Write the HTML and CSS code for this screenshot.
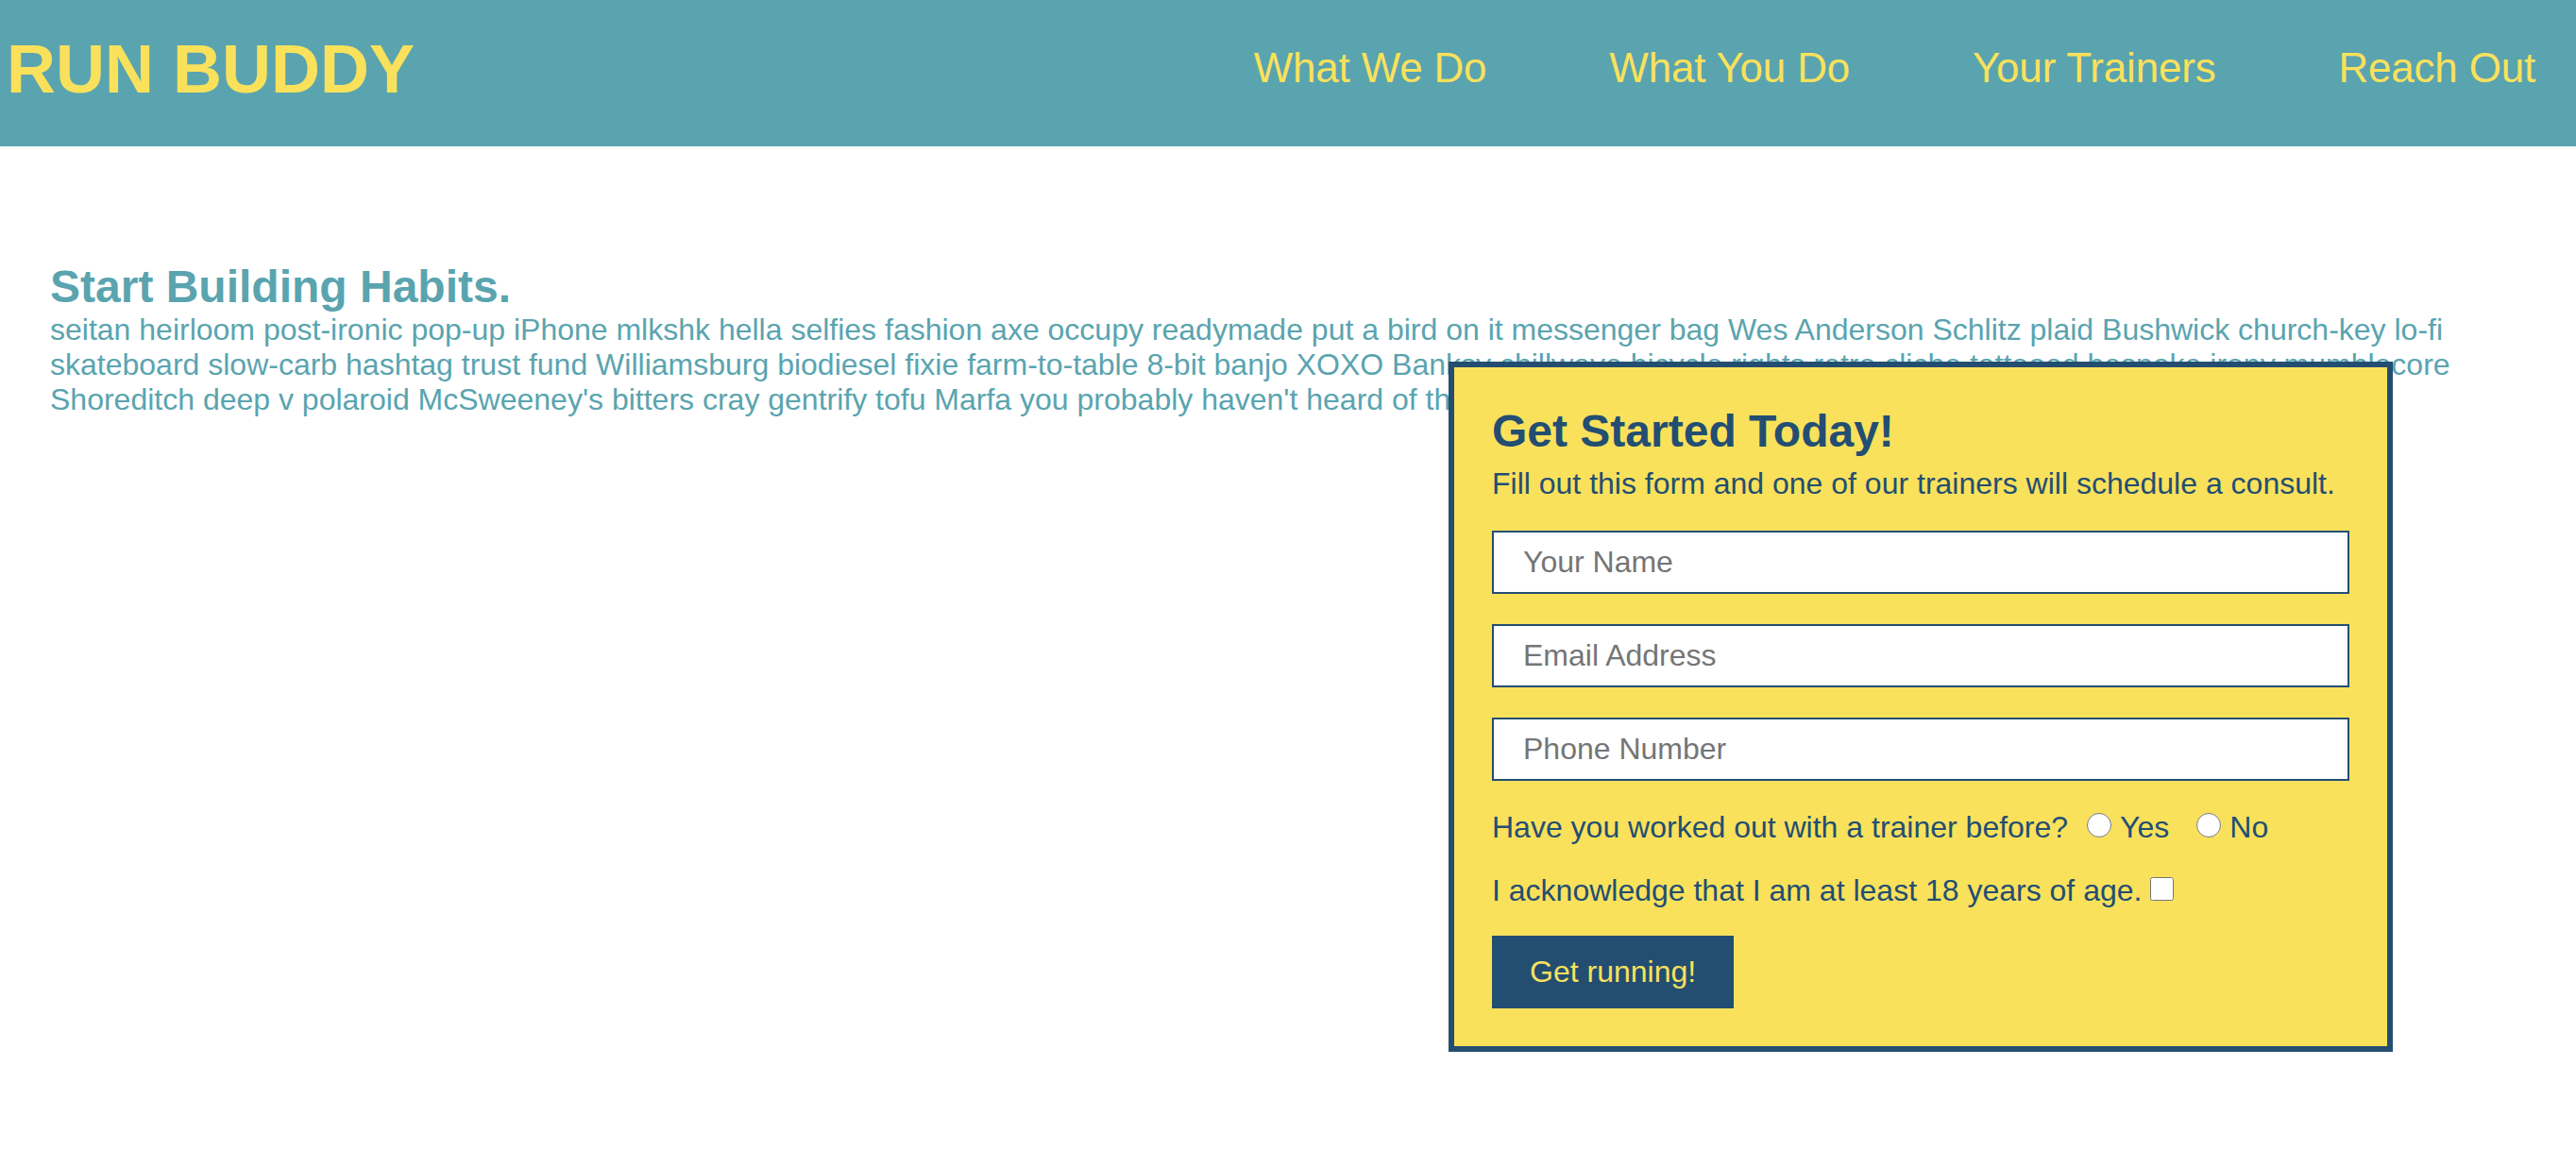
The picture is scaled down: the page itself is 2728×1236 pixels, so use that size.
FILE: index.html
```html
<!DOCTYPE html>
<html lang="en">
<head>
<meta charset="utf-8">
<title>Run Buddy</title>
<link rel="stylesheet" href="styles.css">
</head>
<body>
<header class="site-header">
  <h1 class="logo">RUN BUDDY</h1>
  <nav class="main-nav">
    <ul class="nav-list">
      <li><a class="nav-link" href="#what-we-do">What We Do</a></li>
      <li><a class="nav-link" href="#what-you-do">What You Do</a></li>
      <li><a class="nav-link" href="#your-trainers">Your Trainers</a></li>
      <li><a class="nav-link" href="#reach-out">Reach Out</a></li>
    </ul>
  </nav>
</header>
<main class="page">
  <section class="intro">
    <h2 class="intro-title">Start Building Habits.</h2>
    <p class="intro-text">seitan heirloom post-ironic pop-up iPhone mlkshk hella selfies fashion axe occupy readymade put a bird on it messenger bag Wes Anderson Schlitz plaid Bushwick church-key lo-fi skateboard slow-carb hashtag trust fund Williamsburg biodiesel fixie farm-to-table 8-bit banjo XOXO Banksy chillwave bicycle rights retro cliche tattooed bespoke irony mumblecore Shoreditch deep v polaroid McSweeney's bitters cray gentrify tofu Marfa you probably haven't heard of them.</p>
  </section>
  <form class="signup">
    <h2 class="signup-title">Get Started Today!</h2>
    <p class="signup-lead">Fill out this form and one of our trainers will schedule a consult.</p>
    <input class="field" type="text" placeholder="Your Name">
    <input class="field" type="email" placeholder="Email Address">
    <input class="field field-last" type="tel" placeholder="Phone Number">
    <p class="question">Have you worked out with a trainer before?<input class="radio radio-first" type="radio" name="trainer" id="yes"><label for="yes">Yes</label><input class="radio radio-second" type="radio" name="trainer" id="no"><label for="no">No</label></p>
    <p class="question">I acknowledge that I am at least 18 years of age.<input class="check" type="checkbox"></p>
    <button class="submit" type="button">Get running!</button>
  </form>
</main>
</body>
</html>
```

FILE: styles.css
```css
html, body {
  margin: 0;
  padding: 0;
  background: #ffffff;
  font-family: "Liberation Sans", Arial, Helvetica, sans-serif;
}

.site-header {
  box-sizing: border-box;
  height: 155px;
  background: #5aa4af;
  display: flex;
  justify-content: space-between;
  align-items: flex-start;
  padding: 0 43px 0 7px;
}

.logo {
  margin: 32px 0 0;
  font-size: 72px;
  line-height: 82px;
  font-weight: bold;
  color: #f9e15c;
}

.nav-list {
  display: flex;
  gap: 130px;
  list-style: none;
  margin: 46px 0 0;
  padding: 0;
}

.nav-link {
  display: block;
  font-size: 44px;
  line-height: 51px;
  letter-spacing: -0.2px;
  color: #f9e15c;
  text-decoration: none;
}

.page {
  position: relative;
  min-height: 1081px;
}

.intro {
  padding: 122px 53px 0;
}

.intro-title {
  margin: 0;
  font-size: 48px;
  line-height: 54px;
  font-weight: bold;
  color: #5aa4af;
}

.intro-text {
  margin: 0;
  font-size: 32px;
  line-height: 36.8px;
  color: #5aa4af;
}

.signup {
  position: absolute;
  top: 228px;
  left: 1534px;
  width: 1000px;
  box-sizing: border-box;
  border: 6px solid #234e72;
  background: #f9e15c;
  padding: 40px;
  display: flex;
  flex-direction: column;
  color: #234e72;
}

.signup-title {
  margin: 0 0 10px;
  font-size: 48px;
  line-height: 55px;
  font-weight: bold;
}

.signup-lead {
  margin: 0 0 31px;
  font-size: 32px;
  line-height: 36.8px;
}

.field {
  box-sizing: border-box;
  width: 100%;
  height: 67px;
  margin: 0 0 32px;
  padding: 0 31px;
  border: 2px solid #234e72;
  border-radius: 0;
  background: #ffffff;
  font-family: "Liberation Sans", Arial, Helvetica, sans-serif;
  font-size: 32px;
  color: #234e72;
  outline: none;
}

.field::placeholder {
  color: #757575;
}

.field-last {
  margin-bottom: 31px;
}

.question {
  margin: 0 0 30px;
  font-size: 32px;
  line-height: 36.8px;
}

.radio {
  width: 26px;
  height: 26px;
  margin: 0 9px 0 20px;
  vertical-align: baseline;
}

.radio-second {
  margin-left: 29px;
}

.check {
  width: 25px;
  height: 25px;
  margin: 0 0 0 9px;
  vertical-align: baseline;
}

.submit {
  align-self: flex-start;
  margin: 0;
  padding: 20px 40px;
  border: 0;
  border-radius: 0;
  background: #234e72;
  color: #f9e15c;
  font-family: "Liberation Sans", Arial, Helvetica, sans-serif;
  font-size: 32px;
  line-height: 37px;
}
```
